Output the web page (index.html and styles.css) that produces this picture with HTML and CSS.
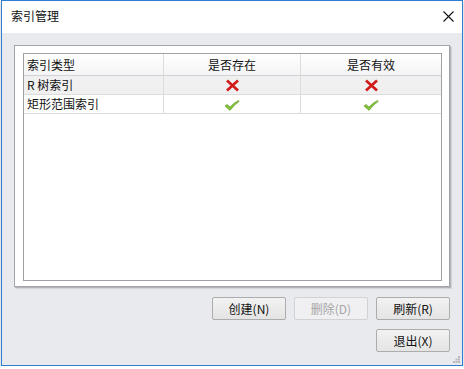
FILE: index.html
```html
<!DOCTYPE html>
<html lang="zh">
<head>
<meta charset="utf-8">
<link rel="stylesheet" href="styles.css">
</head>
<body>
<div class="window">
  <div class="titlebar">
    <span class="title">索引管理</span>
    <svg class="close" width="11" height="11" viewBox="0 0 11 11"><path d="M0.5 0.5 L10.5 10.5 M10.5 0.5 L0.5 10.5" stroke="#111" stroke-width="1.1" fill="none"/></svg>
  </div>
  <div class="content">
    <div class="panel">
      <div class="list">
        <div class="row head">
          <div class="cell c1 left">索引类型</div>
          <div class="cell c2">是否存在</div>
          <div class="cell c3">是否有效</div>
        </div>
        <div class="row alt">
          <div class="cell c1 left">R 树索引</div>
          <div class="cell c2"><svg class="ico" width="15" height="13" viewBox="0 0 15 13"><path d="M2 1.5 L13 11.5 M13 1.5 L2 11.5" stroke="#d21a1a" stroke-width="2.7" stroke-linecap="butt" fill="none"/></svg></div>
          <div class="cell c3"><svg class="ico" width="15" height="13" viewBox="0 0 15 13"><path d="M2 1.5 L13 11.5 M13 1.5 L2 11.5" stroke="#d21a1a" stroke-width="2.7" stroke-linecap="butt" fill="none"/></svg></div>
        </div>
        <div class="row">
          <div class="cell c1 left">矩形范围索引</div>
          <div class="cell c2"><svg class="ico chk" width="16" height="11" viewBox="0 0 16 11"><path d="M1 6 L3 4.5 L6 7 Q10 2.5 14.5 0.5 L15.3 1.3 Q10.5 4.5 6 10.5 Z" fill="#84c03a" stroke="#5f9c22" stroke-width="0.6"/></svg></div>
          <div class="cell c3"><svg class="ico chk" width="16" height="11" viewBox="0 0 16 11"><path d="M1 6 L3 4.5 L6 7 Q10 2.5 14.5 0.5 L15.3 1.3 Q10.5 4.5 6 10.5 Z" fill="#84c03a" stroke="#5f9c22" stroke-width="0.6"/></svg></div>
        </div>
      </div>
    </div>
    <div class="btnrow">
      <button class="btn">创建(N)</button>
      <button class="btn disabled">删除(D)</button>
      <button class="btn">刷新(R)</button>
    </div>
    <div class="btnrow">
      <button class="btn">退出(X)</button>
    </div>
    <svg class="grip" width="7" height="7" viewBox="0 0 7 7"><g fill="#b8b8be"><rect x="5" y="0" width="2" height="2"/><rect x="2.5" y="2.5" width="2" height="2"/><rect x="5" y="2.5" width="2" height="2"/><rect x="0" y="5" width="2" height="2"/><rect x="2.5" y="5" width="2" height="2"/><rect x="5" y="5" width="2" height="2"/></g></svg>
  </div>
</div>
</body>
</html>
```
FILE: styles.css
```css
html, body {
  margin: 0;
  padding: 0;
  background: #ffffff;
}
body {
  font-family: "Noto Sans CJK SC", "Noto Sans", sans-serif;
  font-size: 12px;
  color: #111;
}
.window {
  margin-left: 1px;
  width: 462px;
  height: 366px;
  box-sizing: border-box;
  border: 1px solid #2e7ed4;
  display: flex;
  flex-direction: column;
  box-shadow: 0 2px 3px rgba(0,0,0,0.25);
}
.titlebar {
  height: 32px;
  flex: none;
  background: #fff;
  display: flex;
  align-items: center;
  justify-content: space-between;
  padding: 0 8px 0 9px;
  box-sizing: border-box;
}
.title {
  font-size: 12px;
  line-height: 14px;
  margin-top: -2px;
}
.close {
  display: block;
  margin-top: -1px;
}
.content {
  flex: 1;
  background: #e9eaee;
  padding: 12px 12px 0 12px;
  position: relative;
  display: flex;
  flex-direction: column;
  align-items: flex-end;
}
.panel {
  align-self: stretch;
  height: 242px;
  box-sizing: border-box;
  background: #fff;
  border: 1px solid #a4a4ac;
  box-shadow: 1px 1px 1px rgba(0,0,0,0.18), 2px 2px 1px rgba(0,0,0,0.06);
  padding: 7px 7px 6px 8px;
}
.list {
  height: 228px;
  box-sizing: border-box;
  border: 1px solid #a0a0a6;
  background: #fff;
}
.row {
  display: flex;
  height: 18px;
  border-bottom: 1px solid #dcdcdc;
}
.row.head {
  height: 21px;
  background: linear-gradient(#ffffff, #f4f4f6);
  border-bottom: 1px solid #d2d2d6;
}
.row.alt {
  background: #f0f0f0;
}
.cell {
  display: flex;
  align-items: center;
  justify-content: center;
  line-height: 14px;
  box-sizing: border-box;
}
.cell.left {
  justify-content: flex-start;
  padding-left: 3px;
}
.c1 { width: 140px; border-right: 1px solid #dcdcdc; }
.c2 { width: 137px; border-right: 1px solid #dcdcdc; }
.c3 { flex: 1; }
.head .cell { padding-top: 1px; }
.ico { display: block; }
.chk { margin-top: 2px; }
.btnrow {
  display: flex;
  gap: 7px;
  margin-top: 10px;
}
.btnrow + .btnrow {
  margin-top: 9px;
}
.btn {
  width: 74px;
  height: 23px;
  box-sizing: border-box;
  border: 1px solid #acacac;
  border-radius: 2px;
  background: linear-gradient(#f2f2f2, #e4e4e4);
  font-family: "Noto Sans CJK SC", "Noto Sans", sans-serif;
  font-size: 12px;
  line-height: 14px;
  color: #111;
  padding: 0;
  margin: 0;
}
.btn + .btn { margin-left: 1px; }
.btn.disabled {
  color: #a6a6a6;
  border-color: #d2d2d4;
  background: #f0f0f2;
}
.grip {
  position: absolute;
  right: 2px;
  bottom: 2px;
}
```
